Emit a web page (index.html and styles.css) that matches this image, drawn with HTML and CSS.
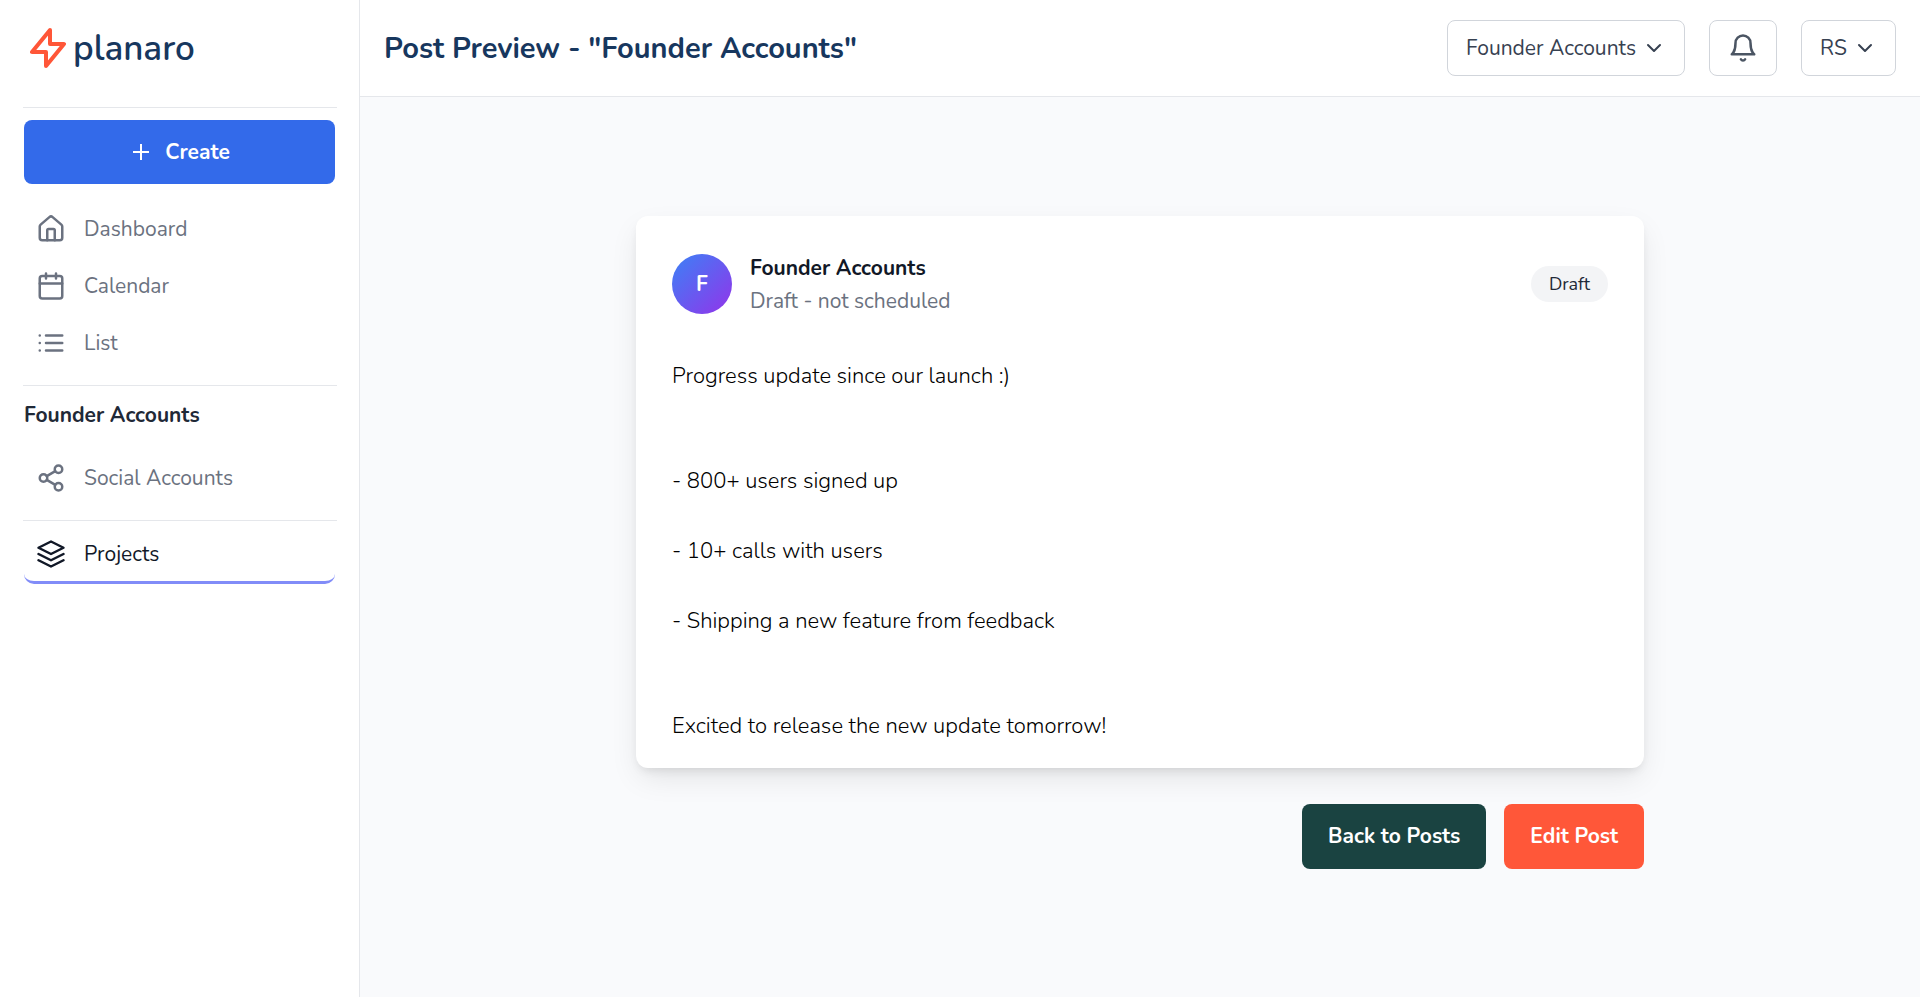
FILE: index.html
```html
<!DOCTYPE html>
<html lang="en">
<head>
<meta charset="utf-8">
<meta name="viewport" content="width=device-width, initial-scale=1">
<title>Planaro - Post Preview</title>
<link rel="stylesheet" href="styles.css">
</head>
<body>
<div class="app">
  <aside class="sidebar">
    <a class="brand" href="#">
      <svg class="brand-icon" viewBox="0 0 36 40" aria-hidden="true"><path d="M20 2 2 24h14v14l18-22H20z"/></svg>
      <span>planaro</span>
    </a>
    <hr class="rule">
    <button class="create" type="button">
      <svg class="plus" viewBox="0 0 16 16" aria-hidden="true"><path d="M8 0v16M0 8h16"/></svg>
      Create
    </button>
    <nav class="nav">
      <a class="nav-item" href="#"><svg class="icon" viewBox="0 0 24 24" aria-hidden="true"><path d="M15 21v-8a1 1 0 0 0-1-1h-4a1 1 0 0 0-1 1v8"/><path d="M3 10a2 2 0 0 1 .709-1.528l7-5.999a2 2 0 0 1 2.582 0l7 5.999A2 2 0 0 1 21 10v9a2 2 0 0 1-2 2H5a2 2 0 0 1-2-2z"/></svg>Dashboard</a>
      <a class="nav-item" href="#"><svg class="icon" viewBox="0 0 24 24" aria-hidden="true"><rect x="3" y="4" width="18" height="18" rx="2"/><path d="M8 2v4M16 2v4M3 10h18"/></svg>Calendar</a>
      <a class="nav-item" href="#"><svg class="icon" viewBox="0 0 24 24" aria-hidden="true"><path d="M8 6h13M8 12h13M8 18h13M3 6h.01M3 12h.01M3 18h.01"/></svg>List</a>
    </nav>
    <hr class="rule">
    <h2 class="group-title">Founder Accounts</h2>
    <nav class="nav">
      <a class="nav-item" href="#"><svg class="icon" viewBox="0 0 24 24" aria-hidden="true"><circle cx="18" cy="5" r="3"/><circle cx="6" cy="12" r="3"/><circle cx="18" cy="19" r="3"/><path d="m8.6 13.5 6.8 4M15.4 6.5l-6.8 4"/></svg>Social Accounts</a>
    </nav>
    <hr class="rule">
    <a class="nav-item active" href="#"><svg class="icon" viewBox="0 0 24 24" aria-hidden="true"><path d="m12 2 10 5-10 5L2 7zM2 17l10 5 10-5M2 12l10 5 10-5"/></svg>Projects</a>
  </aside>
  <div class="page">
    <header class="topbar">
      <h1 class="title">Post Preview - "Founder Accounts"</h1>
      <div class="tools">
        <button class="tool" type="button">Founder Accounts<svg class="chevron" viewBox="0 0 20 20" aria-hidden="true"><path d="m4 7 6 6 6-6"/></svg></button>
        <button class="tool bell" type="button" aria-label="Notifications"><svg class="icon" viewBox="0 0 24 24" aria-hidden="true"><path d="M6 8a6 6 0 0 1 12 0c0 7 3 9 3 9H3s3-2 3-9M10.300 21a1.940 1.940 0 0 0 3.400 0"/></svg></button>
        <button class="tool" type="button">RS<svg class="chevron" viewBox="0 0 20 20" aria-hidden="true"><path d="m4 7 6 6 6-6"/></svg></button>
      </div>
    </header>
    <main class="content">
      <article class="card">
        <header class="card-head">
          <div class="avatar">F</div>
          <div class="who">
            <h2 class="name">Founder Accounts</h2>
            <p class="status">Draft - not scheduled</p>
          </div>
          <span class="pill">Draft</span>
        </header>
        <div class="post">Progress update since our launch :)


- 800+ users signed up

- 10+ calls with users

- Shipping a new feature from feedback


Excited to release the new update tomorrow!</div>
      </article>
      <div class="actions">
        <button class="action back" type="button">Back to Posts</button>
        <button class="action edit" type="button">Edit Post</button>
      </div>
    </main>
  </div>
</div>
</body>
</html>
```
FILE: styles.css
```css
* { box-sizing: border-box; }
body { margin: 0; font-family: Nunito, Lato, sans-serif; font-size: 21px; font-weight: 400; line-height: 35px; color: #111827; background: #fff; }
h1, h2, p { margin: 0; }
button { font: inherit; cursor: pointer; }
a { color: inherit; text-decoration: none; }
.app { display: flex; min-height: 100vh; }
.sidebar { flex: none; width: 360px; padding: 0 24px; border-right: 1px solid #e5e7eb; background: #fff; }
.brand { display: flex; align-items: center; gap: 7px; height: 107px; padding: 0 6px 11px; font-size: 35px; font-weight: 600; color: #17375e; }
.brand-icon { width: 36px; height: 40px; fill: none; stroke: #ff5638; stroke-width: 4; stroke-linejoin: round; }
.rule { height: 1px; margin: 0 -2px 0 -1px; border: 0; background: #e5e7eb; }
.create { display: flex; align-items: center; justify-content: center; gap: 16px; width: 100%; height: 64px; margin: 12px 0 16px; padding: 0 0 0 4px; border: 0; border-radius: 8px; background: #336aea; color: #fff; font-weight: 700; }
.plus { width: 16px; height: 16px; fill: none; stroke: currentColor; stroke-width: 2; }
.icon { flex: none; width: 30px; height: 30px; fill: none; stroke: currentColor; stroke-width: 2; stroke-linecap: round; stroke-linejoin: round; }
.nav { padding-bottom: 14px; }
.nav-item { display: flex; align-items: center; gap: 18px; height: 57px; padding: 0 12px; line-height: 36px; color: #6b7280; }
.group-title { height: 63px; padding-top: 12px; font-size: 21px; font-weight: 700; color: #1f2937; }
.active { height: 63px; padding-top: 5px; border-bottom: 3px solid #818cf8; border-radius: 10px; color: #111827; }
.page { display: flex; flex: 1; flex-direction: column; min-width: 0; background: #f9fafc; }
.topbar { display: flex; align-items: center; justify-content: space-between; height: 97px; padding: 0 24px; border-bottom: 1px solid #e5e7eb; background: #fff; }
.title { font-size: 29px; font-weight: 700; color: #17375e; }
.tools { display: flex; gap: 24px; }
.tool { display: flex; align-items: center; gap: 8px; height: 56px; padding: 0 20px 0 18px; border: 1px solid #d1d5db; border-radius: 8px; background: #fff; color: #374151; }
.bell { padding: 0 18px; color: #4b5563; }
.chevron { width: 20px; height: 20px; fill: none; stroke: currentColor; stroke-width: 2; stroke-linecap: round; stroke-linejoin: round; }
.content { width: 100%; max-width: 1008px; margin: 0 auto; padding: 119px 0 48px; }
.card { padding: 35px 36px 24px; border-radius: 12px; background: #fff; box-shadow: 0 12px 30px -4px rgba(0, 0, 0, .1), 0 5px 10px -3px rgba(0, 0, 0, .1); }
.card-head { display: flex; align-items: center; gap: 18px; height: 66px; margin-bottom: 42px; }
.avatar { display: grid; place-items: center; width: 60px; height: 60px; border-radius: 50%; background: linear-gradient(135deg, #3b82f6, #9333ea); color: #fff; font-weight: 700; }
.who { flex: 1; padding-top: 2px; line-height: 33px; }
.name { font-size: 21px; font-weight: 700; }
.status { color: #6b7280; }
.pill { padding: 0 18px; border-radius: 18px; background: #f3f4f6; color: #1f2937; font-size: 18px; line-height: 36px; }
.post { font-size: 22px; font-weight: 300; color: #000; white-space: pre-wrap; }
.actions { display: flex; justify-content: flex-end; gap: 18px; margin-top: 36px; }
.action { height: 65px; padding: 0 26px; border: 0; border-radius: 8px; color: #fff; font-weight: 700; }
.back { background: #1a4341; }
.edit { background: #ff5739; }
```
